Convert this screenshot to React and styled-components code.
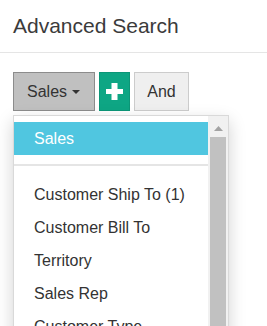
import React from "react";
import styled, { createGlobalStyle } from "styled-components";

const GlobalStyle = createGlobalStyle`
body {
    margin: 0;
    padding: 0;
    background: #fff;
    font-family: "Liberation Sans", Arial, sans-serif;
}
`

const Page = styled.div`
height: 326px;
overflow: hidden;
background: #fff;
`
const Header = styled.div`
box-sizing: border-box;
height: 53px;
padding: 14px 13px 0;
border-bottom: 1px solid #e5e5e5;
`
const Title = styled.h1`
margin: 0;
font-size: 21px;
font-weight: normal;
line-height: 24px;
color: #3b3b3b;
`
const Body = styled.div`
padding: 19px 13px 0;
`
const Toolbar = styled.div`
position: relative;
display: flex;
gap: 4px;
`
const Button = styled.button`
box-sizing: border-box;
height: 39px;
width: ${p => p.$w}px;
margin: 0;
padding: 0;
display: flex;
align-items: center;
justify-content: center;
font-family: inherit;
font-size: 16px;
color: #333;
background: #efefef;
border: 1px solid #cccccc;
border-radius: 0;
`
const DropButton = styled(Button)`
justify-content: flex-start;
padding: 0 0 0 13px;
background: #c0c0c0;
border-color: #8c8c8c;
`
const AddButton = styled(Button)`
background: #0ea684;
border-color: #0c9677;
`
const Caret = styled.span`
margin-left: 5px;
width: 0;
height: 0;
border-left: 4px solid transparent;
border-right: 4px solid transparent;
border-top: 4px solid #333;
`
const Menu = styled.div`
position: absolute;
top: 43px;
left: 0;
box-sizing: border-box;
width: 216px;
height: 230px;
display: flex;
background: #fff;
border: 1px solid #d9d9d9;
box-shadow: 0 6px 16px rgba(0, 0, 0, 0.18);
overflow: hidden;
`
const List = styled.div`
flex: 1;
padding-top: 6px;
`
const Item = styled.div`
padding: 5px 20px;
line-height: 23px;
font-size: 16px;
color: ${p => (p.$active ? "#fff" : "#333")};
background: ${p => (p.$active ? "#50c6e0" : "transparent")};
white-space: nowrap;
`
const Divider = styled.div`
height: 2px;
margin: 9px 0 12px;
background: #e5e5e5;
`
const ScrollTrack = styled.div`
width: 20px;
background: #f1f1f1;
display: flex;
flex-direction: column;
align-items: center;
`
const ScrollArrow = styled.svg`
margin-top: 10px;
display: block;
`
const ScrollThumb = styled.div`
margin-top: 6px;
width: 16px;
flex: 1;
background: #c1c1c1;
`

const items = ["Customer Ship To (1)", "Customer Bill To", "Territory", "Sales Rep", "Customer Type"];

export default function App() {
    return (
        <Page>
            <GlobalStyle />
            <Header>
                <Title>Advanced Search</Title>
            </Header>
            <Body>
                <Toolbar>
                    <DropButton $w={82}>Sales<Caret /></DropButton>
                    <AddButton $w={31}>
                        <svg width="17" height="17" viewBox="0 0 17 17">
                            <rect x="0" y="6" width="17" height="5" fill="#fff" />
                            <rect x="5.5" y="0" width="6" height="17" fill="#fff" />
                        </svg>
                    </AddButton>
                    <Button $w={55}>And</Button>
                    <Menu>
                        <List>
                            <Item $active>Sales</Item>
                            <Divider />
                            {items.map(i => <Item key={i}>{i}</Item>)}
                        </List>
                        <ScrollTrack>
                            <ScrollArrow width="9" height="5" viewBox="0 0 9 5">
                                <polygon points="0,5 4.5,0 9,5" fill="#a3a3a3" />
                            </ScrollArrow>
                            <ScrollThumb />
                        </ScrollTrack>
                    </Menu>
                </Toolbar>
            </Body>
        </Page>
    )
}
